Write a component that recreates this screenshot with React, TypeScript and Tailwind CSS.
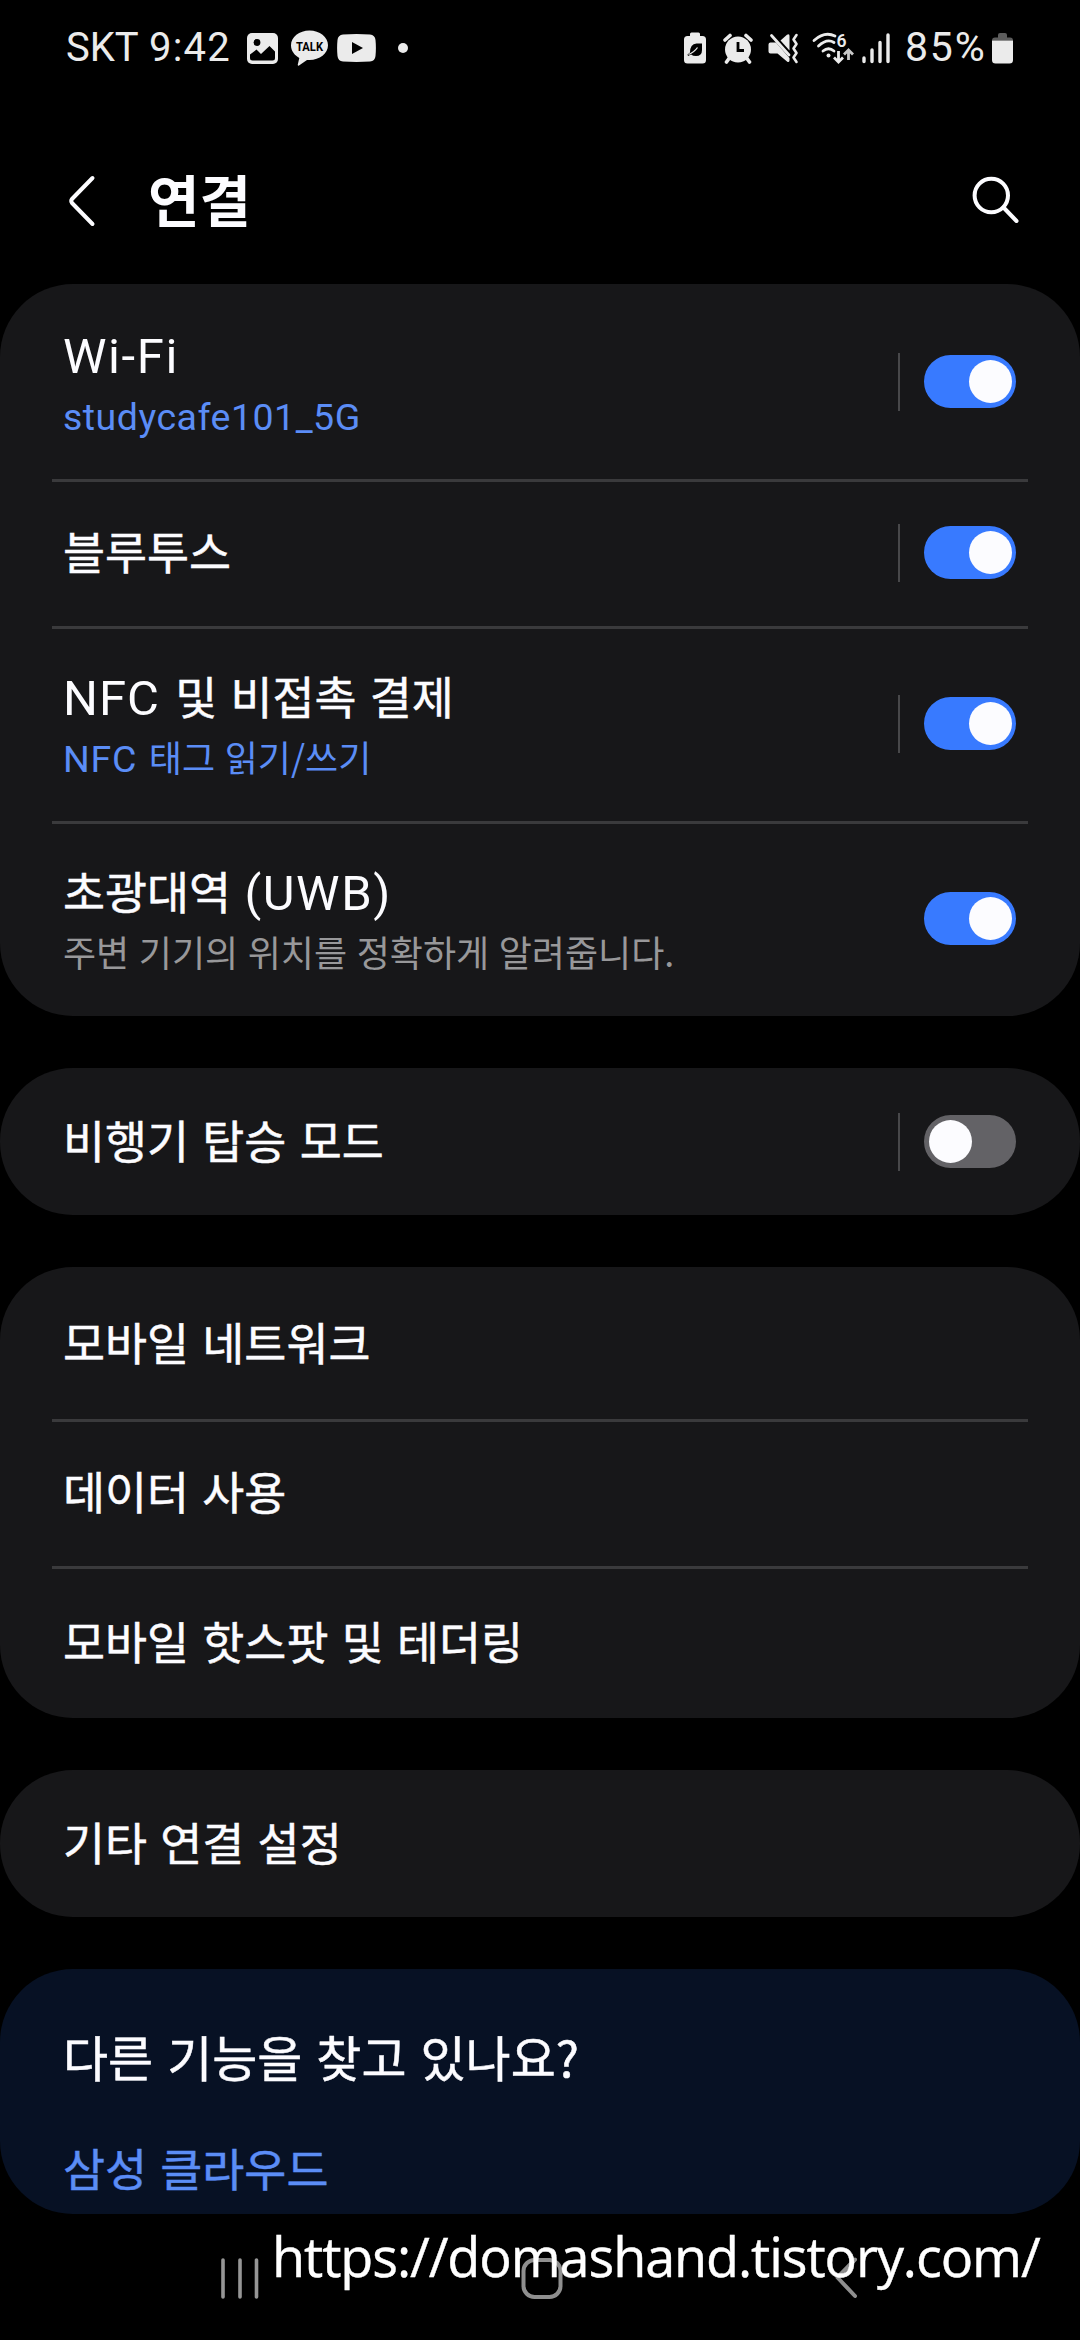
import type { ReactNode } from "react";

interface IRow {
    title: ReactNode;
    sub?: ReactNode;
    subClass?: string;
    on?: boolean;
    split?: boolean;
    height?: string;
}

const BLUE = "text-[#5b8df6]"
const GRAY = "text-[#98989a]"

const Latin = ({children, c = ""}: {children: ReactNode, c?: string}) => (
    <span className={"font-['Roboto'] [-webkit-text-stroke:0] ".concat(c)}>{children}</span>
)

const radioRows: IRow[] = [
    {
        title: <Latin c="text-[49px] tracking-[1.6px]">Wi-Fi</Latin>,
        sub: <Latin c="text-[37.5px] tracking-[0.5px]">studycafe101_5G</Latin>,
        subClass: BLUE,
        on: true,
        split: true,
        height: "h-[195px]",
    },
    {title: "블루투스", on: true, split: true, height: "h-[147px]"},
    {
        title: <><Latin c="mr-0.5 text-[49px] tracking-[1px]">NFC</Latin> 및 비접촉 결제</>,
        sub: <><Latin c="mr-0.5 text-[37.5px] tracking-[0.8px]">NFC</Latin> 태그 읽기/쓰기</>,
        subClass: BLUE,
        on: true,
        split: true,
        height: "h-[195px]",
    },
    {
        title: <>초광대역 <Latin c="text-[49px] tracking-[1.6px]">(UWB)</Latin></>,
        sub: "주변 기기의 위치를 정확하게 알려줍니다.",
        subClass: GRAY,
        on: true,
        height: "h-[195px]",
    },
]

const airplaneRows: IRow[] = [
    {title: "비행기 탑승 모드", on: false, split: true, height: "h-[147px]"},
]

const mobileRows: IRow[] = [
    {title: "모바일 네트워크", height: "h-[152px]"},
    {title: "데이터 사용", height: "h-[147px]"},
    {title: "모바일 핫스팟 및 테더링", height: "h-[152px]"},
]

const moreRows: IRow[] = [
    {title: "기타 연결 설정", height: "h-[147px]"},
]

function Toggle({on}: {on: boolean}) {
    return (
        <div className={"flex h-[53px] w-[92px] items-center rounded-full pl-[5px] pr-1 ".concat(on ? "justify-end bg-[#387aff]" : "justify-start bg-[#636266]")}>
            <div className="size-[43px] rounded-full bg-[#fcfcff]" />
        </div>
    )
}

function Row({row}: {row: IRow}) {
    return (
        <div className={"flex items-center pl-[63px] pr-16 ".concat(row.height ?? "")}>
            <div className={"flex grow flex-col ".concat(row.sub ? "" : "pb-[5px]")}>
                <div className={"h-[64px] text-[45.7px] whitespace-nowrap text-[#fcfcff] [-webkit-text-stroke:0.5px] [word-spacing:3px] ".concat(row.sub ? "leading-[58px]" : "leading-[64px]")}>{row.title}</div>
                {row.sub && <div className={"h-[52px] text-[36px] leading-[52px] whitespace-nowrap [word-spacing:1.5px] ".concat(row.subClass ?? "")}>{row.sub}</div>}
            </div>
            {row.split && <div className="mr-6 h-[58px] w-0.5 bg-[#48484a]" />}
            {row.on !== undefined && <Toggle on={row.on} />}
        </div>
    )
}

function Card({rows}: {rows: IRow[]}) {
    return (
        <section className="rounded-[73px] bg-[#171719]">
            {rows.map((row, i) => (
                <div key={i}>
                    {i > 0 && <div className="mx-[52px] -mb-[3px] h-[3px] bg-[#3a3a3c]" />}
                    <Row row={row} />
                </div>
            ))}
        </section>
    )
}

function StatusBar() {
    return (
        <div className="flex h-24 items-center pl-[66px] pr-[67px] font-['Roboto'] text-[40px] text-[#ebebeb]">
            <span className="w-[71px] whitespace-nowrap">SKT</span>
            <span className="ml-[12px] w-[98px] tracking-[1.2px] whitespace-nowrap">9:42</span>
            <svg width="31" height="31" viewBox="0 0 31 31">
                <rect width="31" height="31" rx="5" fill="#ebebeb" />
                <circle cx="10" cy="9.5" r="3.4" fill="#000" />
                <path d="M3 21.5L9.5 16.5L14 21L22.500 13L28 18.500V25Q28 27.500 25.500 27.500H5.500Q3 27.500 3 25Z" fill="#000" />
            </svg>
            <svg className="ml-[13px]" width="37" height="36" viewBox="0 0 37 36">
                <path d="M18.500 0.500C28.700 0.500 37 7 37 15.300C37 23.600 28.700 30 18.500 30L16 29.900L8 35.500C7.200 36 6.600 35.500 6.800 34.600L8.300 28C3.400 25.300 0 20.700 0 15.300C0 7 8.300 0.500 18.500 0.500Z" fill="#ebebeb" />
                <text x="18.500" y="20.500" textAnchor="middle" textLength="27" lengthAdjust="spacingAndGlyphs" fontSize="13" fontWeight="700" fontFamily="Roboto, sans-serif" fill="#000">TALK</text>
            </svg>
            <svg className="ml-[9px]" width="39" height="28" viewBox="0 0 39 28">
                <path d="M6 0.500Q19.500 -0.400 33 0.500Q38 1 38.500 6Q39.300 14 38.500 22Q38 27 33 27.500Q19.500 28.400 6 27.500Q1 27 0.500 22Q-0.300 14 0.500 6Q1 1 6 0.500Z" fill="#ebebeb" />
                <path d="M15 8V20L26 14Z" fill="#000" />
            </svg>
            <div className="ml-[22px] size-2.5 rounded-full bg-[#ebebeb]" />
            <div className="grow" />
            <svg width="22" height="32" viewBox="0 0 22 32">
                <path d="M6 4V2Q6 0.500 7.500 0.500H14.500Q16 0.500 16 2V4H18.500Q22 4 22 7.500V28Q22 31.500 18.500 31.500H3.500Q0 31.500 0 28V7.500Q0 4 3.500 4Z" fill="#ebebeb" />
                <path d="M18 11.500V18Q18 24 12 24Q9 24 7 22.500L4 24L3.500 22.500L6 20.500Q6 12 12.500 11.500Z" fill="#000" />
                <path d="M4.500 22.500Q10 20.500 13.500 15.500" stroke="#ebebeb" strokeWidth="1.300" fill="none" />
            </svg>
            <svg className="ml-[17px]" width="30" height="31" viewBox="0 0 30 31">
                <circle cx="15" cy="16.500" r="13" fill="#ebebeb" />
                <path d="M2 7L7 2.500M28 7L23 2.500M6 25.500L3.500 29M24 25.500L26.500 29" stroke="#ebebeb" strokeWidth="3.600" strokeLinecap="round" />
                <path d="M15 9V17.500H21" stroke="#000" strokeWidth="2.800" fill="none" />
            </svg>
            <svg className="ml-[15px]" width="31" height="31" viewBox="0 0 31 31">
                <path d="M2.500 9.500H8L21.500 25V27.500Q21 30 19 28.500L9.500 20.500H2.500Q0.500 20.500 0.500 18.500V11.500Q0.500 9.500 2.500 9.500Z" fill="#ebebeb" />
                <path d="M12.500 7.500L19 1.800Q21.500 0.500 21.500 3V17.500Z" fill="#ebebeb" />
                <path d="M3.500 2.500L21 22" stroke="#ebebeb" strokeWidth="2.800" strokeLinecap="round" />
                <path d="M28.500 2L25.500 6.500L28.500 11L25.500 15.500L28.500 20L25.500 24.500L28.500 29" stroke="#ebebeb" strokeWidth="2.600" fill="none" strokeLinejoin="round" strokeLinecap="round" />
            </svg>
            <svg className="ml-[13px] overflow-visible" width="42" height="32" viewBox="0 0 42 32">
                <g stroke="#ebebeb" strokeWidth="2.800" fill="none" strokeLinecap="round">
                    <path d="M2 8.500Q12.500 -1 23 4" />
                    <path d="M6.500 14Q15 6 22 10.500" />
                    <path d="M11 19Q16.500 14.500 22 19" />
                </g>
                <circle cx="16.500" cy="23.500" r="2" fill="#ebebeb" />
                <text x="24.500" y="14.500" fontSize="17.500" fontWeight="600" fontFamily="Roboto, sans-serif" fill="#ebebeb">6</text>
                <path d="M26.500 19V29M22 25.500L26.500 30L31 25.500" stroke="#ebebeb" strokeWidth="2.800" fill="none" />
                <path d="M36.500 28V18M32 22.500L36.500 18L41 22.500" stroke="#c8c8c8" strokeWidth="2.800" fill="none" />
            </svg>
            <svg className="ml-2" width="28" height="31" viewBox="0 0 28 31">
                <path d="M2 25V28.500M10 17V28.500M18 9.500V28.500M26 2V28.500" stroke="#ebebeb" strokeWidth="3.400" strokeLinecap="round" />
            </svg>
            <span className="ml-[15px] w-[87px] text-[41px] tracking-[1.8px] whitespace-nowrap">85%</span>
            <svg width="21" height="32" viewBox="0 0 21 32">
                <path d="M0 8.500Q0 5.500 3 5.500H6V3Q6 1 8 1H13Q15 1 15 3V5.500H18Q21 5.500 21 8.500Z" fill="#5c5c5c" />
                <path d="M0 8.500H21V28Q21 31.500 17.500 31.500H3.500Q0 31.500 0 28Z" fill="#ebebeb" />
            </svg>
        </div>
    )
}

function Header() {
    return (
        <header className="flex h-[188px] items-center pt-[21px] pl-[68px] pr-[60px]">
            <svg width="28" height="52" viewBox="0 0 28 52" fill="none" stroke="#fcfcff" strokeWidth="4" strokeLinecap="round" strokeLinejoin="round">
                <path d="M24.500 3L4 24Q2.500 26 4 28L24.500 49" />
            </svg>
            <h1 className="ml-[52px] grow pb-[6px] text-[56px] leading-[80px] font-bold text-[#fcfcff]">연결</h1>
            <svg width="50" height="50" viewBox="0 0 50 50" fill="none" stroke="#fcfcff" strokeWidth="4" strokeLinecap="round">
                <circle cx="21.300" cy="19.500" r="16.700" />
                <path d="M33.500 31.500L46.500 45" />
            </svg>
        </header>
    )
}

function NavBar() {
    return (
        <nav className="flex items-start pt-[43px] pl-[220px]">
            <svg width="40" height="44" viewBox="0 0 40 44" stroke="#969696" strokeWidth="3.600" strokeLinecap="round">
                <path d="M3 3V40M20 3V40M36.500 3V40" />
            </svg>
            <svg className="ml-[260px]" width="44" height="44" viewBox="0 0 44 44" fill="none" stroke="#8f8f8f" strokeWidth="4">
                <rect x="3.500" y="3" width="37" height="37" rx="11" />
            </svg>
            <svg className="ml-[270px]" width="26" height="44" viewBox="0 0 26 44" fill="none" stroke="#8f8f8f" strokeWidth="4" strokeLinecap="round" strokeLinejoin="round">
                <path d="M21 2.500L3.500 20.500L21 39" />
            </svg>
        </nav>
    )
}

export default function App() {
    return (
        <div className="relative h-[2340px] w-[1080px] overflow-hidden bg-black font-['Noto_Sans_CJK_KR',sans-serif]">
            <StatusBar />
            <Header />
            <main className="flex flex-col gap-[52px]">
                <Card rows={radioRows} />
                <Card rows={airplaneRows} />
                <Card rows={mobileRows} />
                <Card rows={moreRows} />
                <section className="h-[245px] rounded-[73px] bg-[#071124] pt-[52px] pl-[63px] whitespace-nowrap [-webkit-text-stroke:0.5px] [word-spacing:3px]">
                    <div className="h-[70px] text-[49px] leading-[70px] text-[#fcfcff]">다른 기능을 찾고 있나요?</div>
                    <div className="mt-[42px] h-[68px] text-[45.7px] leading-[68px] text-[#5b8df6]">삼성 클라우드</div>
                </section>
            </main>
            <NavBar />
            <div className="absolute top-[2218px] left-[272px] font-['Open_Sans'] text-[54px] leading-[76px] tracking-[-1.1px] whitespace-nowrap text-white [-webkit-text-stroke:0.4px]">https://domashand.tistory.com/</div>
        </div>
    )
}
